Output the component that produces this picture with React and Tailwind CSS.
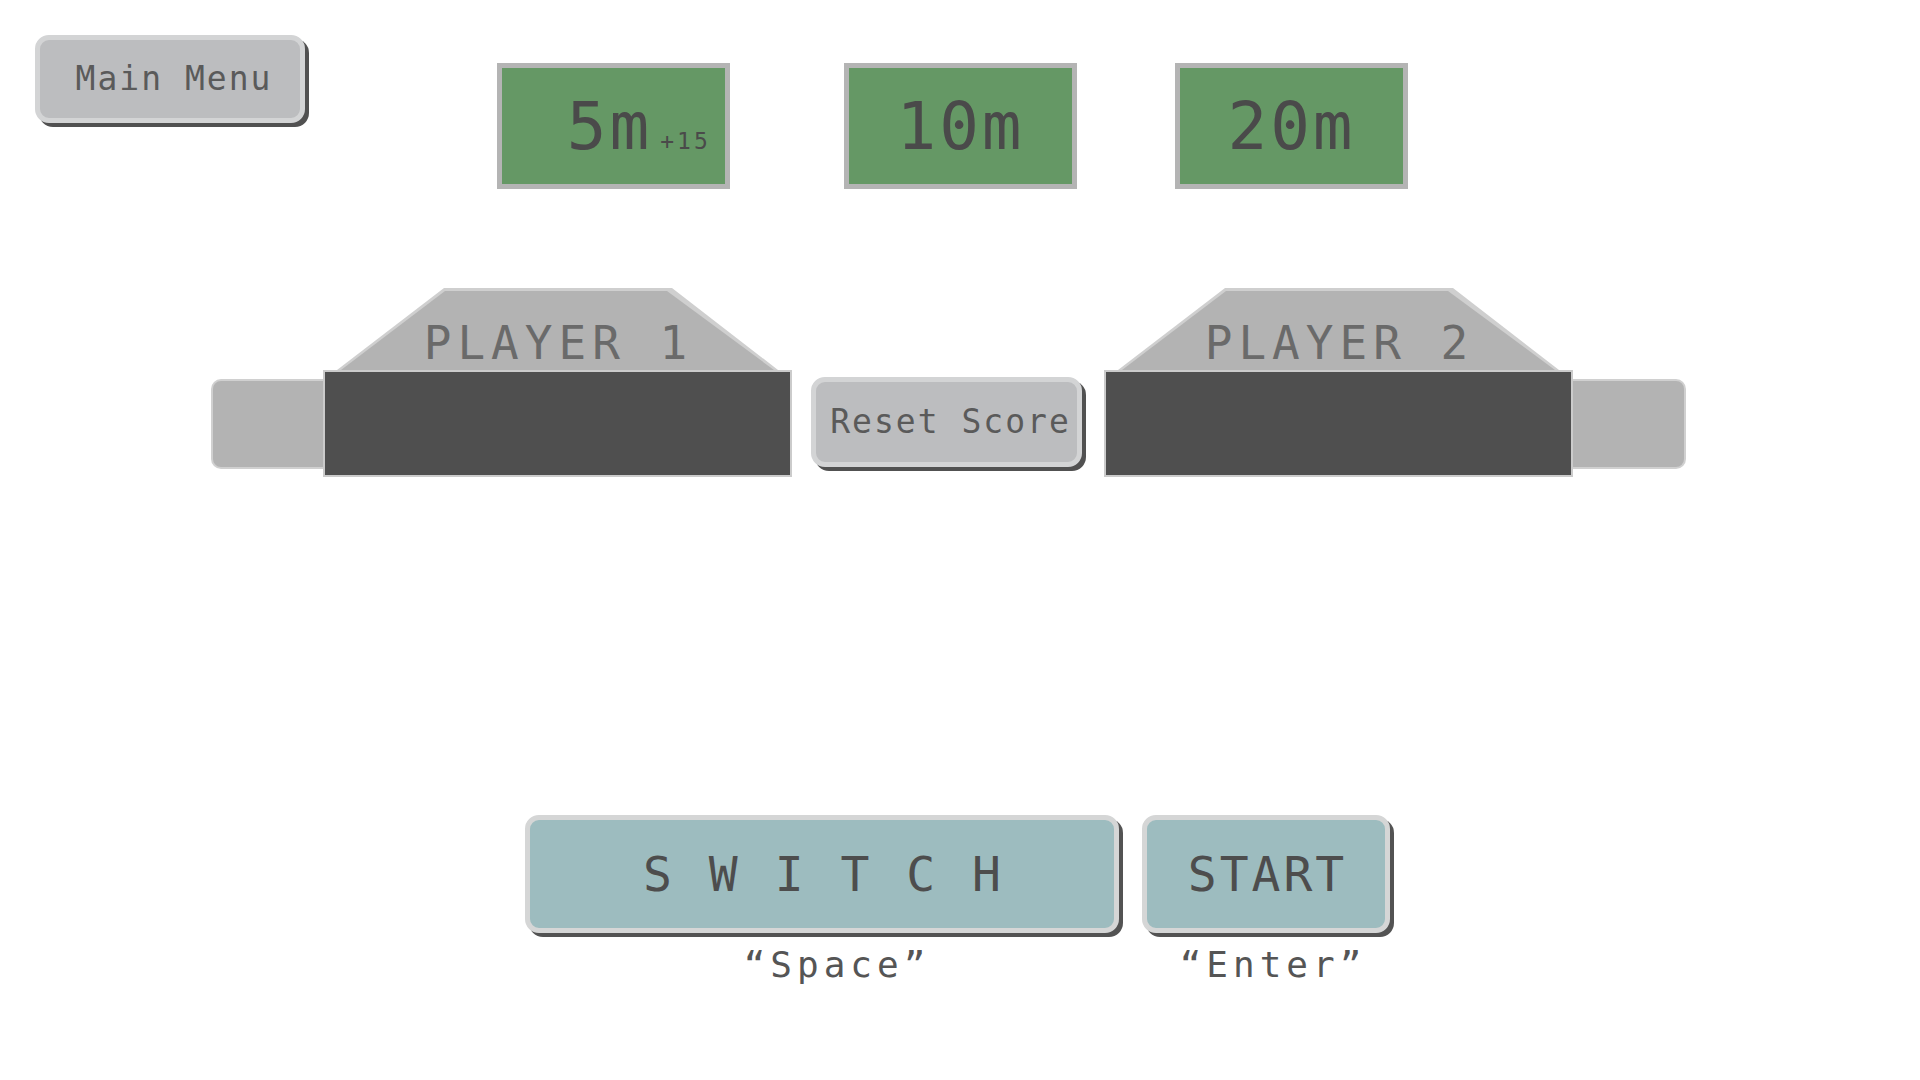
const mono = "font-['DejaVu_Sans_Mono',monospace]";

function GreyButton({ children, className }) {
  return (
    <button
      className={`flex items-center justify-center rounded-[14px] border-[5px] border-[#d3d4d5] bg-[#bcbdbf] pb-[2px] pl-[8px] text-[33px] leading-none tracking-[2px] text-[#5a5a5a] shadow-[4px_4px_0_#515151] ${className}`}
    >
      {children}
    </button>
  );
}

function TimeBox({ label, extra }) {
  return (
    <div className="flex h-[126px] w-[233px] items-center justify-center border-[5px] border-[#b4b4b4] bg-[#659865] pt-[2px]">
      <div className="flex items-baseline">
        <span className="text-[66px] leading-none tracking-[3px] text-[#4a4a4a]">{label}</span>
        {extra && (
          <span className="ml-[8px] w-0 whitespace-nowrap text-[23px] leading-none tracking-[3px] text-[#4a4a4a]">
            {extra}
          </span>
        )}
      </div>
    </div>
  );
}

function Trapezoid({ name }) {
  return (
    <div className="h-[82px] w-[441px] self-center bg-[#cfcfcf] px-[4px] pt-[3px] [clip-path:polygon(107px_0,335px_0,441px_100%,0_100%)]">
      <div className="flex h-[79px] items-end justify-center bg-[#b3b3b3] pb-[4px] pl-[2px] [clip-path:polygon(104px_0,326px_0,433px_100%,0_100%)]">
        <span className="text-[46px] leading-none tracking-[6px] text-[#6a6a6a]">{name}</span>
      </div>
    </div>
  );
}

function PlayerCard({ name }) {
  return (
    <div className="flex w-[469px] flex-col">
      <Trapezoid name={name} />
      <div className="h-[107px] w-[469px] border-2 border-[#cbcbcb] bg-[#4f4f4f]" />
    </div>
  );
}

function TealButton({ children, label, width, textClass, labelPad }) {
  return (
    <div className={`flex flex-col ${width}`}>
      <button
        className={`flex h-[118px] items-center justify-center rounded-[14px] border-[5px] border-[#d5d6d6] bg-[#9dbcbf] text-[48px] leading-none text-[#4d4d4d] shadow-[4px_4px_0_#535353] ${textClass}`}
      >
        {children}
      </button>
      <div className={`mt-[14px] text-center text-[36px] leading-none tracking-[5px] text-[#555555] ${labelPad}`}>
        {label}
      </div>
    </div>
  );
}

export default function App() {
  return (
    <div className={`min-h-[1080px] w-[1920px] bg-white ${mono}`}>
      {/* top bar */}
      <div className="flex items-start pl-[35px] pt-[35px]">
        <GreyButton className="h-[88px] w-[270px]">Main Menu</GreyButton>
        <div className="ml-[192px] mt-[28px] flex">
          <TimeBox label="5m" extra="+15" />
          <div className="ml-[114px]">
            <TimeBox label="10m" />
          </div>
          <div className="ml-[98px]">
            <TimeBox label="20m" />
          </div>
        </div>
      </div>

      {/* players */}
      <div className="mt-[99px] flex items-end pl-[211px]">
        <div className="mb-[8px] h-[90px] w-[112px] rounded-l-[10px] border-2 border-r-0 border-[#d0d0d0] bg-[#b3b3b3]" />
        <PlayerCard name="PLAYER 1" />
        <GreyButton className="mb-[10px] ml-[19px] mr-[22px] h-[90px] w-[271px]">Reset Score</GreyButton>
        <PlayerCard name="PLAYER 2" />
        <div className="mb-[8px] h-[90px] w-[113px] rounded-r-[10px] border-2 border-l-0 border-[#d0d0d0] bg-[#b3b3b3]" />
      </div>

      {/* controls */}
      <div className="mt-[338px] flex pl-[525px]">
        <TealButton
          width="w-[594px]"
          label="“Space”"
          textClass="tracking-[4px] pl-[4px]"
          labelPad="pl-[30px]"
        >
          S W I T C H
        </TealButton>
        <div className="ml-[23px]">
          <TealButton
            width="w-[248px]"
            label="“Enter”"
            textClass="tracking-[3px] pl-[3px]"
            labelPad="pl-[14px]"
          >
            START
          </TealButton>
        </div>
      </div>
    </div>
  );
}
